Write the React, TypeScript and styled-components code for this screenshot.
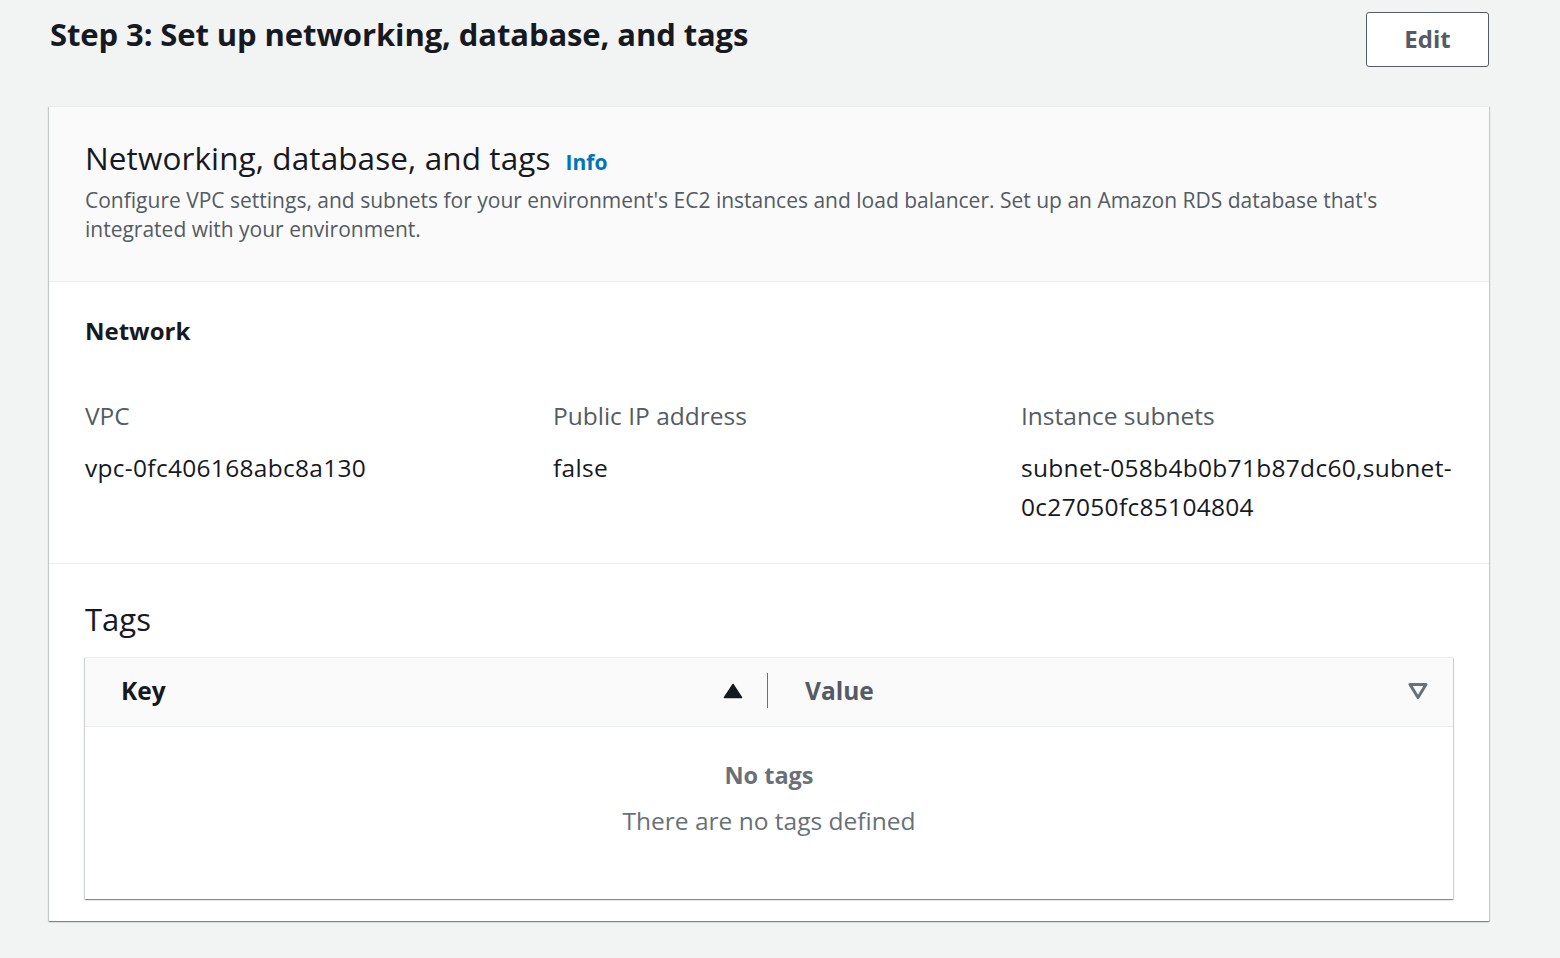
import React from "react";
import styled, { createGlobalStyle } from "styled-components";

const GlobalStyle = createGlobalStyle`
  html, body {
    margin: 0;
    padding: 0;
    background: #f2f3f3;
  }
  body {
    font-family: "Open Sans", "Noto Sans", "Liberation Sans", sans-serif;
    color: #16191f;
  }
  * { box-sizing: border-box; }
`;

const Page = styled.div`
  padding: 12px 71px 40px 49px;
  min-height: 958px;
`;

const StepHeader = styled.div`
  display: flex;
  justify-content: space-between;
  align-items: flex-start;
  margin-bottom: 39px;
`;

const StepTitle = styled.h1`
  margin: 3px 0 0 1px;
  font-size: 31px;
  line-height: 38px;
  font-weight: 700;
  letter-spacing: -0.1px;
  color: #16191f;
`;

const EditButton = styled.button`
  width: 123px;
  height: 55px;
  padding: 0 0 2px;
  background: #ffffff;
  border: 1px solid #545b64;
  border-radius: 3px;
  font-family: inherit;
  font-size: 24px;
  font-weight: 700;
  color: #545b64;
  cursor: pointer;
`;

const Container = styled.section`
  background: #ffffff;
  box-shadow: 0 1px 1px 0 rgba(0, 28, 36, 0.3), 1px 1px 1px 0 rgba(0, 28, 36, 0.15),
    -1px 1px 1px 0 rgba(0, 28, 36, 0.15);
  border-top: 1px solid #eaeded;
`;

const ContainerHeader = styled.header`
  background: #fafafa;
  border-bottom: 1px solid #eaeded;
  padding: 32px 37px 37px 36px;
`;

const TitleRow = styled.div`
  display: flex;
  align-items: baseline;
  gap: 15px;
`;

const ContainerTitle = styled.h2`
  margin: 0;
  font-size: 31.5px;
  line-height: 38px;
  font-weight: 400;
  letter-spacing: 0.1px;
  color: #16191f;
`;

const InfoLink = styled.a`
  font-size: 21px;
  font-weight: 700;
  color: #0073bb;
  text-decoration: none;
`;

const Description = styled.p`
  margin: 9px 0 0;
  font-size: 21px;
  line-height: 29px;
  color: #545b64;
`;

const Section = styled.div<{ $pt: number; $pb: number; $divider?: boolean }>`
  padding: ${(p) => p.$pt}px 36px ${(p) => p.$pb}px 36px;
  border-bottom: ${(p) => (p.$divider ? "1px solid #eaeded" : "none")};
`;

const SectionHeading = styled.h3`
  margin: 0 0 47px;
  font-size: 24px;
  line-height: 38px;
  font-weight: 700;
`;

const Grid = styled.div`
  display: grid;
  grid-template-columns: repeat(3, 1fr);
  column-gap: 36px;
`;

const Field = styled.div`
  display: flex;
  flex-direction: column;
  gap: 13px;
`;

const Label = styled.div`
  font-size: 24.5px;
  line-height: 38px;
  color: #545b64;
`;

const Value = styled.div`
  font-size: 24.5px;
  line-height: 39px;
  letter-spacing: 0.3px;
  color: #16191f;
`;

const TagsHeading = styled.h2`
  margin: 0 0 19px;
  font-size: 31px;
  line-height: 38px;
  font-weight: 400;
`;

const Table = styled.div`
  border-top: 1px solid #eaeded;
  box-shadow: 0 1px 1px 0 rgba(0, 28, 36, 0.3), 1px 1px 1px 0 rgba(0, 28, 36, 0.15),
    -1px 1px 1px 0 rgba(0, 28, 36, 0.15);
  background: #ffffff;
`;

const HeadRow = styled.div`
  display: grid;
  grid-template-columns: 683px 1fr;
  height: 69px;
  background: #fafafa;
  border-bottom: 1px solid #eaeded;
`;

const HeadCell = styled.div<{ $muted?: boolean; $pl: number; $pr: number }>`
  display: flex;
  align-items: center;
  justify-content: space-between;
  padding: 0 ${(p) => p.$pr}px 3px ${(p) => p.$pl}px;
  font-size: 24.5px;
  font-weight: 700;
  color: ${(p) => (p.$muted ? "#545b64" : "#16191f")};
  position: relative;
`;

const Divider = styled.span`
  position: absolute;
  right: 0;
  top: 15px;
  width: 1px;
  height: 35px;
  background: #687078;
`;

const Empty = styled.div`
  display: flex;
  flex-direction: column;
  align-items: center;
  gap: 8px;
  padding: 29px 0 59px;
  color: #687078;
`;

const EmptyTitle = styled.div`
  font-size: 23.5px;
  line-height: 38px;
  font-weight: 700;
`;

const EmptyText = styled.div`
  font-size: 24.5px;
  line-height: 38px;
`;

const SortUp = () => (
  <svg width="20" height="16" viewBox="0 0 20 16">
    <path d="M10 1.5 L18.5 14.5 L1.5 14.5 Z" fill="#16191f" stroke="#16191f" strokeWidth="1.5" strokeLinejoin="round" />
  </svg>
);

const SortDown = () => (
  <svg width="20" height="18" viewBox="0 0 20 18">
    <path d="M2 2.5 L18 2.5 L10 15.5 Z" fill="none" stroke="#687078" strokeWidth="3" strokeLinejoin="round" />
  </svg>
);

export default function App() {
  return (
    <>
      <GlobalStyle />
      <Page>
        <StepHeader>
          <StepTitle>Step 3: Set up networking, database, and tags</StepTitle>
          <EditButton>Edit</EditButton>
        </StepHeader>
        <Container>
          <ContainerHeader>
            <TitleRow>
              <ContainerTitle>Networking, database, and tags</ContainerTitle>
              <InfoLink href="#">Info</InfoLink>
            </TitleRow>
            <Description>
              Configure VPC settings, and subnets for your environment's EC2 instances and load balancer. Set up an
              Amazon RDS database that's integrated with your environment.
            </Description>
          </ContainerHeader>
          <Section $pt={30} $pb={37} $divider>
            <SectionHeading>Network</SectionHeading>
            <Grid>
              <Field>
                <Label>VPC</Label>
                <Value>vpc-0fc406168abc8a130</Value>
              </Field>
              <Field>
                <Label>Public IP address</Label>
                <Value>false</Value>
              </Field>
              <Field>
                <Label>Instance subnets</Label>
                <Value>subnet-058b4b0b71b87dc60,subnet-0c27050fc85104804</Value>
              </Field>
            </Grid>
          </Section>
          <Section $pt={36} $pb={22}>
            <TagsHeading>Tags</TagsHeading>
            <Table>
              <HeadRow>
                <HeadCell $pl={36} $pr={25}>
                  <span>Key</span>
                  <SortUp />
                  <Divider />
                </HeadCell>
                <HeadCell $muted $pl={37} $pr={25}>
                  <span>Value</span>
                  <SortDown />
                </HeadCell>
              </HeadRow>
              <Empty>
                <EmptyTitle>No tags</EmptyTitle>
                <EmptyText>There are no tags defined</EmptyText>
              </Empty>
            </Table>
          </Section>
        </Container>
      </Page>
    </>
  );
}
